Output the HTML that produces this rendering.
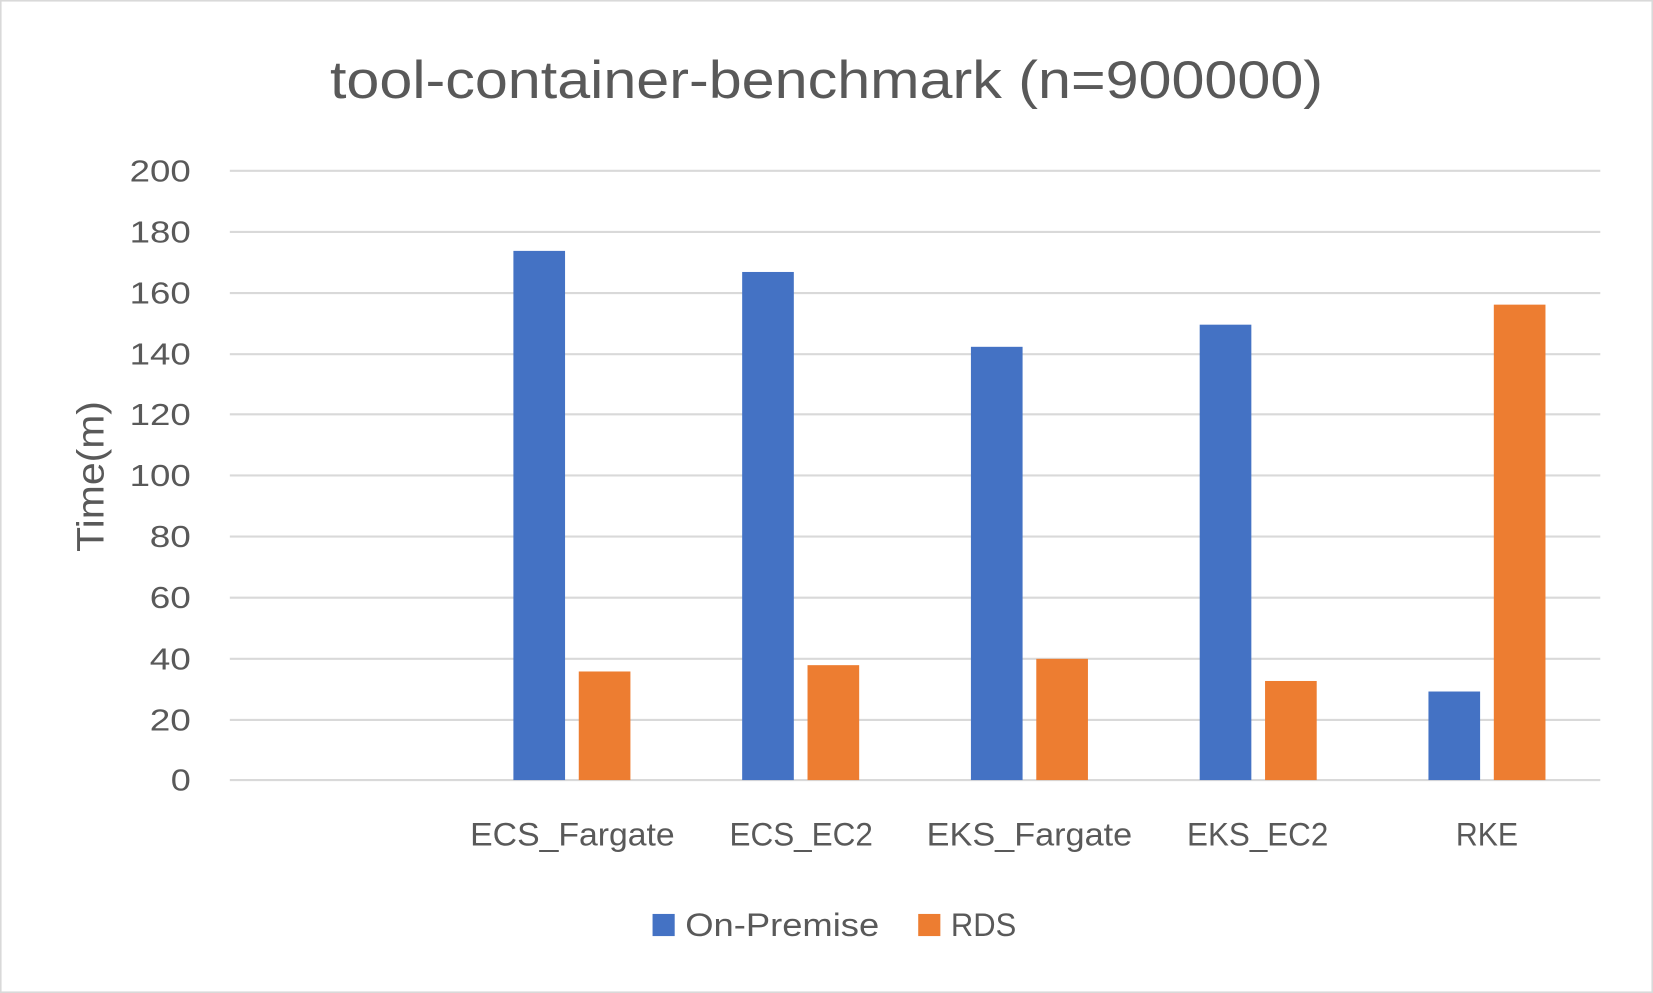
<!DOCTYPE html>
<html><head><meta charset="utf-8"><style>
html,body{margin:0;padding:0;background:#fff;}
svg{display:block;}
text{font-family:"Liberation Sans",sans-serif;fill:#595959;}
</style></head><body>
<svg width="1653" height="993" viewBox="0 0 1568 942" preserveAspectRatio="none" xmlns="http://www.w3.org/2000/svg">
<rect x="0.5" y="0.5" width="1567" height="941" fill="#fff" stroke="#d9d9d9" stroke-width="2"/>
<text x="313" y="93" font-size="50" textLength="942" lengthAdjust="spacingAndGlyphs">tool-container-benchmark (n=900000)</text>
<g stroke="#d9d9d9" stroke-width="2">
<line x1="218" x2="1518" y1="162" y2="162"/>
<line x1="218" x2="1518" y1="220" y2="220"/>
<line x1="218" x2="1518" y1="278" y2="278"/>
<line x1="218" x2="1518" y1="336" y2="336"/>
<line x1="218" x2="1518" y1="393" y2="393"/>
<line x1="218" x2="1518" y1="451" y2="451"/>
<line x1="218" x2="1518" y1="509" y2="509"/>
<line x1="218" x2="1518" y1="567" y2="567"/>
<line x1="218" x2="1518" y1="625" y2="625"/>
<line x1="218" x2="1518" y1="683" y2="683"/>
<line x1="218" x2="1518" y1="740" y2="740"/>
</g>
<g font-size="29" text-anchor="end">
<text x="181" y="172" textLength="58" lengthAdjust="spacingAndGlyphs">200</text>
<text x="181" y="230" textLength="58" lengthAdjust="spacingAndGlyphs">180</text>
<text x="181" y="288" textLength="58" lengthAdjust="spacingAndGlyphs">160</text>
<text x="181" y="346" textLength="58" lengthAdjust="spacingAndGlyphs">140</text>
<text x="181" y="403" textLength="58" lengthAdjust="spacingAndGlyphs">120</text>
<text x="181" y="461" textLength="58" lengthAdjust="spacingAndGlyphs">100</text>
<text x="181" y="519" textLength="39" lengthAdjust="spacingAndGlyphs">80</text>
<text x="181" y="577" textLength="39" lengthAdjust="spacingAndGlyphs">60</text>
<text x="181" y="635" textLength="39" lengthAdjust="spacingAndGlyphs">40</text>
<text x="181" y="693" textLength="39" lengthAdjust="spacingAndGlyphs">20</text>
<text x="181" y="750" textLength="19" lengthAdjust="spacingAndGlyphs">0</text>
</g>
<text transform="translate(98,452) rotate(-90)" font-size="36" text-anchor="middle" textLength="143" lengthAdjust="spacingAndGlyphs">Time(m)</text>
<g fill="#4472c4">
<rect x="487" y="238" width="49" height="502"/>
<rect x="704" y="258" width="49" height="482"/>
<rect x="921" y="329" width="49" height="411"/>
<rect x="1138" y="308" width="49" height="432"/>
<rect x="1355" y="656" width="49" height="84"/>
</g>
<g fill="#ed7d31">
<rect x="549" y="637" width="49" height="103"/>
<rect x="766" y="631" width="49" height="109"/>
<rect x="983" y="625" width="49" height="115"/>
<rect x="1200" y="646" width="49" height="94"/>
<rect x="1417" y="289" width="49" height="451"/>
</g>
<g font-size="31">
<text x="446" y="802" textLength="194" lengthAdjust="spacingAndGlyphs">ECS_Fargate</text>
<text x="692" y="802" textLength="136" lengthAdjust="spacingAndGlyphs">ECS_EC2</text>
<text x="879" y="802" textLength="195" lengthAdjust="spacingAndGlyphs">EKS_Fargate</text>
<text x="1126" y="802" textLength="134" lengthAdjust="spacingAndGlyphs">EKS_EC2</text>
<text x="1381" y="802" textLength="59" lengthAdjust="spacingAndGlyphs">RKE</text>
</g>
<rect x="619" y="867" width="21" height="21" fill="#4472c4"/>
<text x="650" y="888" font-size="31" textLength="184" lengthAdjust="spacingAndGlyphs">On-Premise</text>
<rect x="871" y="867" width="21" height="21" fill="#ed7d31"/>
<text x="902" y="888" font-size="31" textLength="62" lengthAdjust="spacingAndGlyphs">RDS</text>
</svg>
</body></html>
